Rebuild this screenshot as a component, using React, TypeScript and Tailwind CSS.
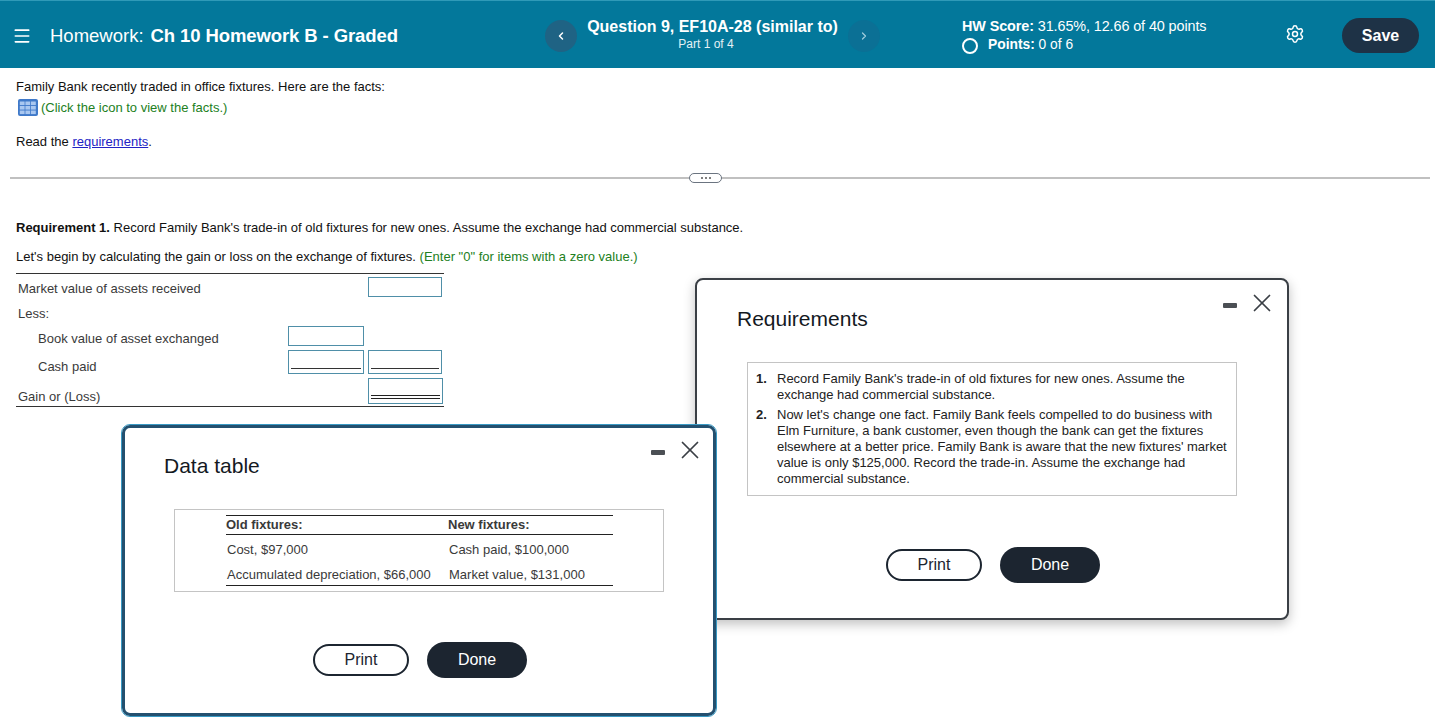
import { ChevronLeft, ChevronRight, Menu, Settings, X } from "lucide-react";

function DialogShell({
  title,
  className,
  controlsClass,
  children,
}: {
  title: string;
  className: string;
  controlsClass: string;
  children: React.ReactNode;
}) {
  return (
    <div className={`absolute bg-white rounded-lg ${className}`}>
      <div className={`absolute flex items-center gap-[10px] text-[#3a3f45] ${controlsClass}`}>
        <div className="w-[14px] h-[5px] mt-[4px] rounded-[1px] bg-[#4b4f54]" />
        <X className="w-[30px] h-[30px]" strokeWidth={1.4} />
      </div>
      <h2 className="text-[21px] leading-[26px] text-[#14191f]">{title}</h2>
      {children}
    </div>
  );
}

function DialogButtons({ className }: { className: string }) {
  return (
    <div className={`flex items-center justify-center gap-[18px] ${className}`}>
      <button className="w-[96px] h-[32px] rounded-full border-2 border-[#1c2530] bg-white text-[16px] text-[#1c2530]">
        Print
      </button>
      <button className="w-[100px] h-[36px] rounded-full bg-[#1c2530] text-[16px] text-white">
        Done
      </button>
    </div>
  );
}

function UnderlinedField({ width, height, double }: { width: string; height: string; double?: boolean }) {
  return (
    <div className={`${width} ${height} shrink-0 border border-[#4f8fa8] bg-white px-[2px] flex flex-col justify-end pb-[4px]`}>
      <div className={double ? "h-[4px] border-y border-[#222]" : "h-px bg-[#333]"} />
    </div>
  );
}

export default function App() {
  return (
    <div className="relative w-[1435px] h-[720px] overflow-hidden bg-white font-['Liberation_Sans',Arial,sans-serif] text-[13px] text-[#111]">
      <header className="h-[68px] pt-[2px] border-t border-[#2f9ab8] bg-[#03789b] text-white flex items-center">
        <div className="w-[545px] flex items-center shrink-0">
          <Menu className="ml-[12px] w-[20px] h-[20px]" strokeWidth={2} />
          <span className="ml-[18px] text-[18.5px]">Homework:</span>
          <span className="ml-[7px] text-[18.5px] font-bold tracking-[-0.1px]">Ch 10 Homework B - Graded</span>
        </div>
        <button className="w-[32px] h-[32px] rounded-full bg-[#1f6384] flex items-center justify-center shrink-0">
          <ChevronLeft className="w-[12px] h-[12px]" strokeWidth={3} />
        </button>
        <div className="w-[271px] text-center shrink-0 -mt-[4px]">
          <div className="text-[16px] leading-[20px] font-bold">Question 9, EF10A-28 (similar to)</div>
          <div className="text-[12px] leading-[14px] pr-[13px] text-[#e4f1f5]">Part 1 of 4</div>
        </div>
        <button className="w-[32px] h-[32px] rounded-full bg-[#0b7095] flex items-center justify-center shrink-0 text-[#9fcbdc]">
          <ChevronRight className="w-[12px] h-[12px]" strokeWidth={2.5} />
        </button>
        <div className="ml-[82px] w-[321px] shrink-0 leading-[18px]">
          <div className="text-[14.4px] tracking-[-0.1px]">
            <b>HW Score:</b> 31.65%, 12.66 of 40 points
          </div>
          <div className="mt-px flex items-center text-[13.8px]">
            <span className="w-[16px] h-[16px] rounded-full border-2 border-white mr-[10px] mt-[2px]" />
            <span>
              <b>Points:</b> 0 of 6
            </span>
          </div>
        </div>
        <Settings className="ml-[2px] -mt-[3px] w-[20px] h-[20px] shrink-0" strokeWidth={1.8} />
        <button className="ml-[37px] w-[77px] h-[35px] rounded-full bg-[#1e3246] text-[16px] font-bold shrink-0">
          Save
        </button>
      </header>

      <section className="pl-[16px] pt-[8px] leading-[21px]">
        <p>Family Bank recently traded in office fixtures. Here are the facts:</p>
        <p className="flex items-center text-[#228022]">
          <svg viewBox="0 0 20 17" className="ml-[2px] mr-[3px] w-[20px] h-[17px]">
            <rect width="20" height="17" rx="2" fill="#3f79c9" />
            {[2.5, 7, 11.5].map((y) =>
              [1.8, 7.4, 13].map((x) => (
                <rect key={`${x}-${y}`} x={x} y={y} width="4.8" height="3.6" fill="#a9c7f0" />
              )),
            )}
          </svg>
          (Click the icon to view the facts.)
        </p>
        <p className="mt-[13px]">
          Read the <span className="text-[#2222c4] underline">requirements</span>.
        </p>
      </section>

      <div className="relative ml-[10px] w-[1420px] mt-[25px] h-[2px] bg-[#c0c0c0]">
        <div className="absolute left-[679px] -top-[4px] w-[33px] h-[10px] rounded-full border border-[#6b7480] bg-white flex items-center justify-center gap-[2px]">
          <span className="w-[2px] h-[2px] bg-[#555] rounded-full" />
          <span className="w-[2px] h-[2px] bg-[#555] rounded-full" />
          <span className="w-[2px] h-[2px] bg-[#555] rounded-full" />
        </div>
      </div>

      <section className="pl-[16px] pt-[40px]">
        <p className="leading-[18px]">
          <b>Requirement 1.</b> Record Family Bank's trade-in of old fixtures for new ones. Assume the exchange had commercial substance.
        </p>
        <p className="mt-[11px] leading-[18px]">
          Let's begin by calculating the gain or loss on the exchange of fixtures.{" "}
          <span className="text-[#228022]">(Enter "0" for items with a zero value.)</span>
        </p>

        <div className="mt-[7px] w-[428px] border-y border-[#333] text-[#3a3a3a] pt-[3px] pb-[2px]">
          <div className="h-[20px] flex items-center justify-between pl-[2px] pr-[2px]">
            <span className="mt-[4px]">Market value of assets received</span>
            <div className="w-[74px] h-[20px] border border-[#4f8fa8]" />
          </div>
          <div className="h-[29px] pl-[2px] pt-[5px] flex items-center">Less:</div>
          <div className="h-[20px] flex items-center pl-[22px]">
            <span className="w-[250px] mt-[5px]">Book value of asset exchanged</span>
            <div className="w-[76px] h-[20px] border border-[#4f8fa8]" />
          </div>
          <div className="mt-[4px] h-[24px] flex items-center pl-[22px]">
            <span className="w-[250px] mt-[9px]">Cash paid</span>
            <UnderlinedField width="w-[76px]" height="h-[24px]" />
            <div className="ml-[4px]">
              <UnderlinedField width="w-[74px]" height="h-[24px]" />
            </div>
          </div>
          <div className="mt-[4px] h-[26px] flex items-center justify-between pl-[2px] pr-px">
            <span className="mt-[11px]">Gain or (Loss)</span>
            <UnderlinedField width="w-[75px]" height="h-[26px]" double />
          </div>
        </div>
      </section>

      <DialogShell
        title="Requirements"
        className="left-[695px] top-[278px] w-[594px] h-[342px] border-2 border-[#3a3f45] shadow-[0_4px_12px_rgba(0,0,0,0.25)] pl-[40px] pt-[26px]"
        controlsClass="top-[8px] right-[10px]"
      >
        <div className="ml-[10px] mt-[30px] w-[490px] h-[134px] border border-[#c4c4c4] pl-[8px] pt-[8px] leading-[16px] text-[#222]">
          <div className="flex">
            <b className="w-[21px] shrink-0">1.</b>
            <span>
              Record Family Bank's trade-in of old fixtures for new ones. Assume the exchange had commercial substance.
            </span>
          </div>
          <div className="flex mt-[4px]">
            <b className="w-[21px] shrink-0">2.</b>
            <span>
              Now let's change one fact. Family Bank feels compelled to do business with Elm Furniture, a bank customer, even though the bank can get the fixtures elsewhere at a better price. Family Bank is aware that the new fixtures' market value is only $125,000. Record the trade-in. Assume the exchange had commercial substance.
            </span>
          </div>
        </div>
        <DialogButtons className="mt-[51px] -ml-[40px] w-[594px] pr-[2px]" />
      </DialogShell>

      <DialogShell
        title="Data table"
        className="left-[122px] top-[425px] w-[594px] h-[291px] border-[3px] border-[#24506f] outline outline-1 outline-[#3a9ac4] pl-[39px] pt-[25px]"
        controlsClass="top-[7px] right-[8px]"
      >
        <div className="ml-[10px] mt-[30px] w-[490px] h-[83px] border border-[#c4c4c4] pl-[51px] pt-[5px] text-[#3a3a3a]">
          <table className="w-[387px] border-y border-[#222] border-collapse">
            <tbody>
              <tr className="h-[19px] border-b border-[#222] font-bold">
                <td className="w-[222px] leading-[15px] pb-[2px]">Old fixtures:</td>
                <td className="leading-[15px] pb-[2px]">New fixtures:</td>
              </tr>
              <tr className="h-[29px]">
                <td className="pl-px pt-px">Cost, $97,000</td>
                <td className="pl-px pt-px">Cash paid, $100,000</td>
              </tr>
              <tr className="h-[22px]">
                <td className="pl-px pt-px">Accumulated depreciation, $66,000</td>
                <td className="pl-px pt-px">Market value, $131,000</td>
              </tr>
            </tbody>
          </table>
        </div>
        <DialogButtons className="mt-[50px] -ml-[39px] w-[594px] pr-[4px]" />
      </DialogShell>
    </div>
  );
}
